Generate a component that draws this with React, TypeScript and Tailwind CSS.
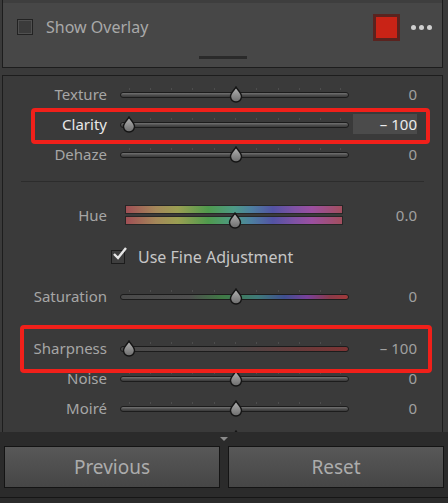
import React from "react";

const ticks = [9, 30, 51, 72, 94, 115, 136, 158, 179, 200, 220];

const Thumb = () => (
  <svg width="16" height="17" viewBox="0 0 16 17" className="absolute -top-[7px]">
    <defs>
      <linearGradient id="thumbGrad" x1="0" y1="0" x2="0" y2="1">
        <stop offset="0" stopColor="#b5b5b5" />
        <stop offset="1" stopColor="#6c6c6c" />
      </linearGradient>
    </defs>
    <path
      d="M8 1 C9.5 4 13.5 7 13.5 10.5 A5.5 5.5 0 0 1 2.5 10.5 C2.5 7 6.5 4 8 1 Z"
      fill="url(#thumbGrad)"
      stroke="#141414"
      strokeWidth="1.4"
    />
  </svg>
);

type Row = {
  label: string;
  value: string;
  pos: number;
  active?: boolean;
  rail?: string;
};

const SliderRow = ({ label, value, pos, active, rail }: Row) => (
  <div className="flex h-[30px] items-center">
    <div
      className={`w-[104px] text-right text-[15px] ${
        active ? "text-[#e8e8e8]" : "text-[#a6a6a6]"
      }`}
    >
      {label}
    </div>
    <div className="relative ml-[13px] h-[30px] w-[229px]">
      {ticks.map((t) => (
        <div
          key={t}
          className="absolute top-[9px] h-[2px] w-px bg-[#4d4d4d]"
          style={{ left: t }}
        />
      ))}
      <div
        className="absolute left-0 right-0 top-[13px] h-[6px] rounded-full border border-[#1c1c1c]"
        style={{
          background:
            rail ?? "linear-gradient(to bottom, #727272, #4a4a4a 60%, #3a3a3a)",
        }}
      />
      <div className="absolute top-[14px]" style={{ left: pos - 8 }}>
        <Thumb />
      </div>
    </div>
    <div
      className={`ml-[4px] flex h-[20px] w-[64px] items-center justify-end text-[15px] ${
        active ? "bg-[#4b4b4b] text-[#ececec]" : "text-[#a0a0a0]"
      }`}
    >
      {value}
    </div>
  </div>
);

const hueGrad =
  "linear-gradient(to right, #a04f55, #a4885a 14%, #9a9f52 24%, #4f9a4d 38%, #4d9a86 50%, #4d7fa0 58%, #5353a3 68%, #7f52a4 78%, #9b4fa0 86%, #a24f5e 100%)";

export default function App() {
  return (
    <div
      className="flex h-[503px] w-[448px] flex-col overflow-hidden bg-[#3a3a3a]"
      style={{ fontFamily: '"Noto Sans", "Open Sans", sans-serif' }}
    >
      {/* Overlay header */}
      <div className="ml-[2px] flex h-[68px] w-[441px] shrink-0 flex-col border-x border-b border-[#1d1d1d] bg-[#474747]">
        <div className="h-[3px] bg-[#3e3e3e]" />
        <div className="flex h-[48px] items-center">
          <div className="ml-[14px] h-[16px] w-[16px] border border-[#222] bg-[#3b3b3b] shadow-[inset_0_0_0_1px_#505050]" />
          <span className="ml-[13px] text-[16px] text-[#a9a9a9]">Show Overlay</span>
          <div className="ml-auto flex h-[27px] w-[27px] items-center justify-center bg-[#5a231f]">
            <div className="h-[21px] w-[21px] bg-[#c92316]" />
          </div>
          <div className="ml-[11px] mr-[10px] flex gap-[3px]">
            <div className="h-[5px] w-[5px] rounded-full bg-[#cfcfcf]" />
            <div className="h-[5px] w-[5px] rounded-full bg-[#cfcfcf]" />
            <div className="h-[5px] w-[5px] rounded-full bg-[#cfcfcf]" />
          </div>
        </div>
        <div className="mx-auto mt-[5px] h-[3px] w-[48px] bg-[#2a2a2a]" />
      </div>

      {/* Sliders panel */}
      <div className="relative ml-[2px] mt-[7px] h-[357px] w-[441px] shrink-0 overflow-hidden border-x border-t border-[#1d1d1d] bg-[#3a3a3a]">
        <div className="pt-[3px]">
          <SliderRow label="Texture" value="0" pos={116} />
          <SliderRow label="Clarity" value="– 100" pos={9} active />
          <SliderRow label="Dehaze" value="0" pos={116} />
        </div>
        <div className="mx-[18px] mt-[12px] h-px bg-[#2c2c2c]" />

        <div className="mt-[18px] flex h-[30px] items-center">
          <div className="w-[104px] text-right text-[15px] text-[#a6a6a6]">Hue</div>
          <div className="relative ml-[18px] h-[30px] w-[218px]">
            <div
              className="absolute left-0 right-0 top-[5px] h-[9px] border border-[#262626]"
              style={{ background: hueGrad }}
            />
            <div
              className="absolute left-0 right-0 top-[16px] h-[9px] border border-[#262626]"
              style={{ background: hueGrad }}
            />
            <div className="absolute top-[19px]" style={{ left: 110 - 8 }}>
              <Thumb />
            </div>
          </div>
          <div className="ml-[6px] w-[68px] text-right text-[15px] text-[#a0a0a0]">0.0</div>
        </div>

        <div className="mt-[12px] flex h-[30px] items-center">
          <div className="relative ml-[108px] h-[14px] w-[14px] border border-[#1c1c1c] bg-[#3e3e3e]">
            <svg width="16" height="16" viewBox="0 0 16 16" className="absolute -top-[5px] left-0">
              <path d="M2 8 L6 12 L14 2" fill="none" stroke="#e6e6e6" strokeWidth="2.4" />
            </svg>
          </div>
          <span className="ml-[13px] text-[16px] text-[#c6c6c6]">Use Fine Adjustment</span>
        </div>

        <div className="mt-[9px]">
          <SliderRow
            label="Saturation"
            value="0"
            pos={116}
            rail="linear-gradient(to right, #4a4a4a, #4e4e4e 30%, #3f7a45 45%, #3f7a78 60%, #3f4f90 72%, #78409a 82%, #8a3a4a 92%, #a03a3a)"
          />
        </div>
        <div className="mt-[22px]">
          <SliderRow
            label="Sharpness"
            value="– 100"
            pos={9}
            rail="linear-gradient(to right, #4a4a4a, #4c4848 50%, #6a3a3a 80%, #7e3434)"
          />
          <SliderRow label="Noise" value="0" pos={116} />
          <SliderRow label="Moiré" value="0" pos={116} />
          <SliderRow label="Defringe" value="0" pos={116} />
        </div>

        {/* annotation boxes */}
        <div className="absolute left-[28px] top-[32px] h-[36px] w-[399px] rounded-[4px] border-[4px] border-[#f0201a]" />
        <div className="absolute left-[17px] top-[249px] h-[48px] w-[412px] rounded-[4px] border-[4px] border-[#f0201a]" />
      </div>

      {/* Footer */}
      <div className="flex flex-1 flex-col bg-[#2b2b2b]">
        <div className="flex h-[14px] justify-center pt-[5px]">
          <div className="h-0 w-0 border-x-[4px] border-t-[4px] border-x-transparent border-t-[#8a8a8a]" />
        </div>
        <div className="mx-[4px] flex gap-[8px]">
          <button className="h-[42px] flex-1 border border-[#141414] bg-gradient-to-b from-[#585858] to-[#464646] text-[19px] text-[#acacac]">
            Previous
          </button>
          <button className="h-[42px] flex-1 border border-[#141414] bg-gradient-to-b from-[#585858] to-[#464646] text-[19px] text-[#acacac]">
            Reset
          </button>
        </div>
        <div className="mt-[9px] h-px bg-[#161616]" />
      </div>
    </div>
  );
}
